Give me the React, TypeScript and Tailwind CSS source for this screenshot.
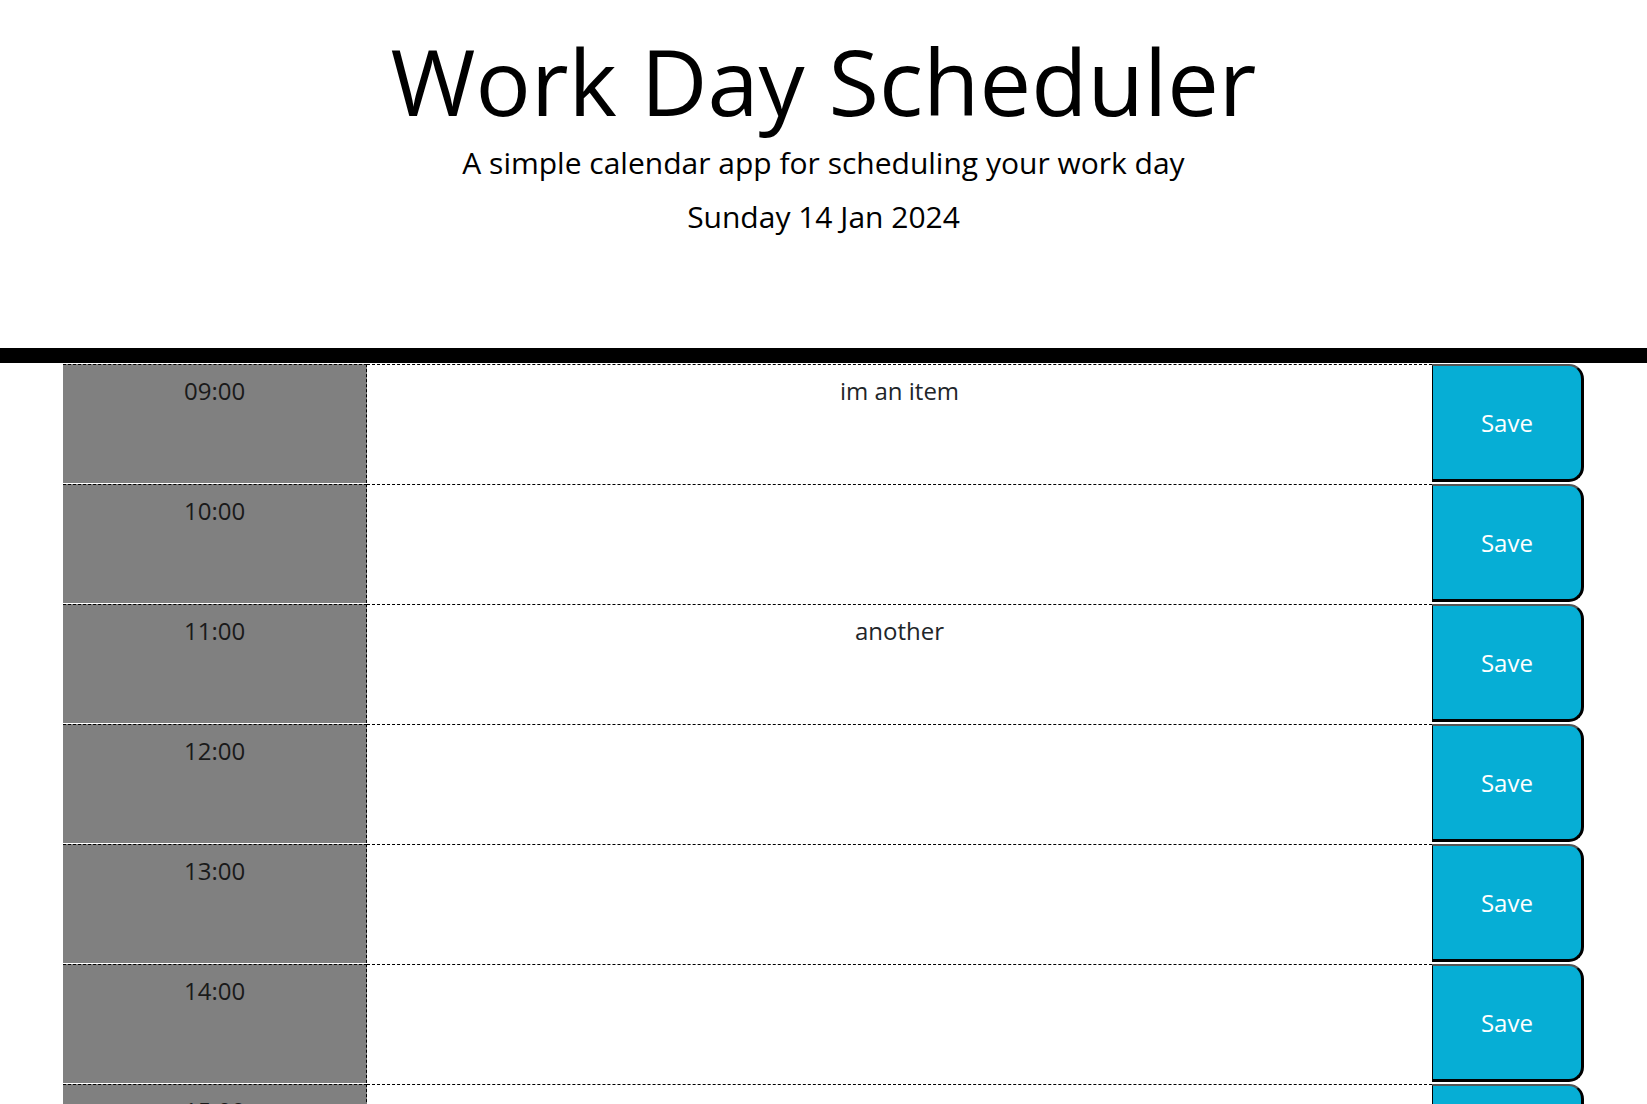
import { useState } from "react";

const HOURS = [9, 10, 11, 12, 13, 14, 15, 16, 17];

const SAVED: Record<number, string> = {
  9: "im an item",
  11: "another",
};

function pad(h: number) {
  return h.toString().padStart(2, "0") + ":00";
}

export default function App() {
  const [notes, setNotes] = useState<Record<number, string>>(SAVED);

  return (
    <div className="min-h-screen bg-white font-['Open_Sans',sans-serif] text-[#212529]">
      <header className="flex flex-col items-center border-b-[15px] border-black pb-[109px] pt-[26px] text-black">
        <h1 className="text-[92px] font-normal leading-[1.2]">Work Day Scheduler</h1>
        <p className="mt-[4px] text-[30px] leading-[1.5]">A simple calendar app for scheduling your work day</p>
        <p className="mt-[9px] text-[30px] leading-[1.5]">Sunday 14 Jan 2024</p>
      </header>

      <div className="mx-[63px]">
        {HOURS.map((h) => (
          <div key={h} className="flex h-[120px] border-t border-white">
            <div className="w-[20%] border-r border-t border-dashed border-black bg-[#808080] pt-2 text-center text-[24px] leading-[1.5] text-[#1a1a1a]">
              {pad(h)}
            </div>
            <textarea
              value={notes[h] ?? ""}
              onChange={(e) => setNotes({ ...notes, [h]: e.target.value })}
              className="w-[70%] resize-none border-t border-dashed border-black bg-transparent px-2 pt-2 text-center text-[24px] leading-[1.5] text-[#212529] outline-none"
            />
            <button
              className="h-[118px] w-[10%] rounded-r-[15px] border-b-[3px] border-l border-r-[3px] border-t-2 border-b-black border-l-black border-r-black border-t-[#555] bg-[#06aed5] text-[24px] text-white"
            >
              Save
            </button>
          </div>
        ))}
      </div>
    </div>
  );
}
